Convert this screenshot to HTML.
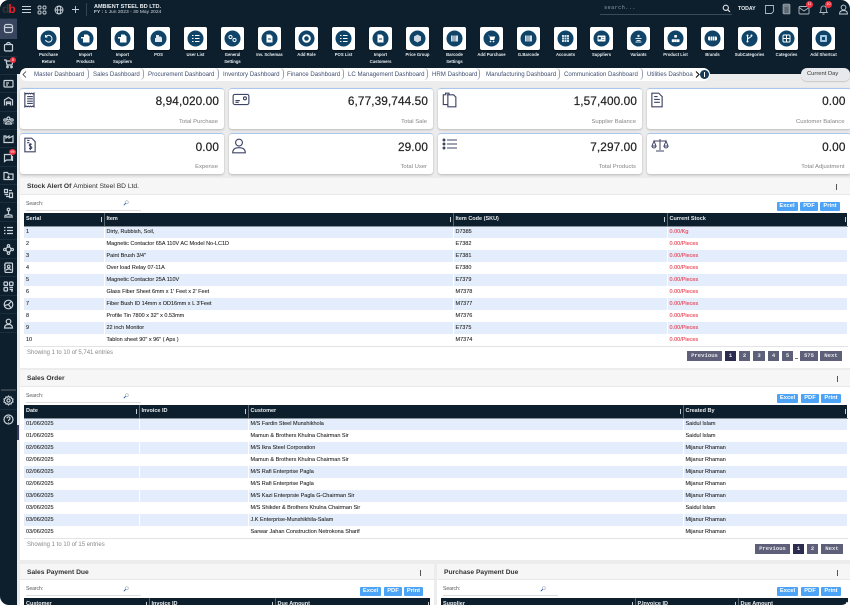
<!DOCTYPE html>
<html><head><meta charset="utf-8"><title>Dashboard</title>
<style>
*{box-sizing:border-box}
html,body{margin:0;padding:0;background:#fff}
body{width:850px;height:605px;overflow:hidden;position:relative;font-family:"Liberation Sans",sans-serif;color:#222}
#app{position:absolute;inset:0;background:#ececec;border-radius:9px;overflow:hidden}
.abs,.tile,.lb,.card,.panel,.btn,.pg,.si,.sl,.ph{position:absolute}
#top{position:absolute;left:0;top:0;width:850px;height:74px;background:#0d1f2d}
#side{position:absolute;left:0;top:0;width:17px;height:605px;background:#0d1f2d}
.sl{left:0;width:17px;height:1px;background:#1a2e3d}
.si{left:3px;width:11px;height:11px;fill:none;stroke:#c9d2da;stroke-width:1.2}
.tile{top:27px;width:23px;height:22.5px;background:#fff;border-radius:2px;box-shadow:0 1px 1px rgba(0,0,0,.5)}
.tile svg{position:absolute;left:3px;top:3px;width:17px;height:17px}
.lb{width:37px;text-align:center;color:#e7ecf0;font-size:4.2px;font-weight:bold;line-height:6.8px;top:52px}
#crumb{position:absolute;left:20px;top:68px;width:690px;height:12.5px;background:#fff;border-radius:7px}
#crumb span{position:absolute;top:3px;font-size:6.1px;color:#3f4f70;white-space:nowrap}
#crumb i{position:absolute;top:0;width:4px;height:12px;border-right:.7px solid #9aa3b5;border-radius:0 6px 6px 0}
.card{background:#fff;border-top:1px solid #a9c6ef;border-radius:3px;box-shadow:0 1px 2px rgba(0,0,0,.22)}
.card b{position:absolute;right:5px;top:5px;font-weight:normal;font-size:11.8px;color:#222;letter-spacing:.1px;-webkit-text-stroke:.2px #222}
.card em{position:absolute;right:6px;top:29.5px;font-style:normal;font-size:5.9px;color:#858585}
.c2 b{top:6px}.c2 em{top:30.5px}
.card svg{position:absolute;left:2px;top:2.5px;width:16px;height:16px;fill:none;stroke:#3f4465;stroke-width:1}
.panel{background:#fff}
.ph{left:0;top:0;right:0;height:17px;background:#f6f6f6;border-bottom:1px solid #e8e8e8;font-size:6.7px;font-weight:bold;color:#333;line-height:18px;padding-left:7px}
.ph span{font-weight:normal;color:#333}
.dots{position:absolute;top:6px;width:1.2px;height:5.5px;background:#555}
.srch{position:absolute;font-size:5px;color:#555}
.sline{position:absolute;height:1px;background:#dedede;width:115px}
.mag{position:absolute;width:6px;height:6px}
.btn{height:9px;background:#4da3f5;color:#fff;font-size:5.8px;font-weight:bold;text-align:center;line-height:9px;border-radius:1px}
table{position:absolute;border-collapse:collapse;table-layout:fixed;font-size:5.5px;color:#222}
th{background:#0d1f2d;color:#e8ecef;height:13px;font-size:5.5px;font-weight:bold;text-align:left;padding:0 0 0 2px;border-right:1px solid #58636c;border-bottom:1px solid #8a9299;position:relative;white-space:nowrap}
th:last-child{border-right:0}
th::after{content:"";position:absolute;right:1.5px;top:4px;width:1px;height:4.5px;background:#c9d0d5}
td{height:12px;padding:0 0 0 2px;white-space:nowrap;overflow:hidden;border-right:1px solid transparent;-webkit-text-stroke:.08px currentColor}
tr:nth-child(odd) td{background:#e3edfb}
tbody tr:nth-child(odd) td{border-right:1px solid #fff}
tbody tr:last-child td{border-bottom:1px solid #e3e3e3}
.r{color:#e8394a}
.show{position:absolute;font-size:6px;color:#8a8a8a}
.pg{height:10px;background:#5d6078;color:#e5e6ec;font-family:"Liberation Mono",monospace;font-size:5.6px;font-weight:bold;text-align:center;line-height:10px}
.pg.on{background:#2b2c4f}
</style></head><body>
<div id="app">
<div id="top"></div>
<!-- topbar -->
<svg class="abs" style="left:21px;top:5px;width:11px;height:9px" viewBox="0 0 11 9" fill="none" stroke="#c9d2da" stroke-width="1"><path d="M1 1.5h9M1 4.5h9M1 7.5h9"/></svg>
<svg class="abs" style="left:37px;top:5px;width:10px;height:10px" viewBox="0 0 10 10" fill="none" stroke="#c9d2da" stroke-width=".9"><rect x="1" y="1" width="3" height="3" rx="1"/><rect x="6" y="1" width="3" height="3" rx="1"/><rect x="1" y="6" width="3" height="3" rx="1"/><rect x="6" y="6" width="3" height="3" rx="1"/></svg>
<svg class="abs" style="left:54px;top:5px;width:10px;height:10px" viewBox="0 0 10 10" fill="none" stroke="#c9d2da" stroke-width=".9"><circle cx="5" cy="5" r="4"/><ellipse cx="5" cy="5" rx="1.8" ry="4"/><path d="M1 5h8"/></svg>
<svg class="abs" style="left:71px;top:5px;width:9px;height:9px" viewBox="0 0 9 9" fill="none" stroke="#c9d2da" stroke-width=".9"><path d="M4.5 1v7M1 4.5h7"/></svg>
<div class="abs" style="left:86px;top:3px;width:1px;height:13px;background:#33434f"></div>
<div class="abs" style="left:94px;top:3.500px;color:#e8ecef;font-size:5.500px;font-weight:bold;white-space:nowrap">AMBIENT STEEL BD LTD.</div>
<div class="abs" style="left:94px;top:10px;color:#c9d2da;font-size:4.900px;white-space:nowrap"><b>FY :</b> 1 Jun 2023 - 30 May 2024</div>
<div class="abs" style="left:604px;top:5px;color:#8b98a3;font-size:5.400px;letter-spacing:.3px;font-family:'Liberation Mono',monospace">search...</div>
<div class="abs" style="left:600px;top:14px;width:132px;height:1px;background:#3a4a57"></div>
<svg class="abs" style="left:722px;top:4px;width:9px;height:9px" viewBox="0 0 9 9" fill="none" stroke="#dfe4e8" stroke-width="1.1"><circle cx="3.8" cy="3.8" r="2.6"/><path d="M5.8 5.8L8 8"/></svg>
<div class="abs" style="left:738px;top:6px;color:#e8ecef;font-size:5.200px;font-weight:bold">TODAY</div>
<svg class="abs" style="left:764px;top:4px;width:11px;height:11px" viewBox="0 0 11 11" fill="none" stroke="#aeb8c0" stroke-width=".9"><path d="M1.5 1.5h8v6l-2 2h-6z"/></svg>
<svg class="abs" style="left:782px;top:3px;width:9px;height:12px" viewBox="0 0 9 12" fill="#77828c" stroke="#aeb8c0" stroke-width=".6"><rect x="1" y="1" width="7" height="10" rx="1"/><path d="M2.5 5h4M2.5 7h4M2.5 9h4" stroke="#0d1f2d"/></svg>
<svg class="abs" style="left:798px;top:5px;width:13px;height:10px" viewBox="0 0 13 10" fill="none" stroke="#aeb8c0" stroke-width=".9"><rect x="1" y="1.5" width="10" height="7.5" rx="1"/><path d="M1 2.5l5 3.500 5-3.500"/></svg>
<div class="abs" style="left:806px;top:1px;width:7px;height:7px;border-radius:50%;background:#f0333f;color:#fff;font-size:3.600px;text-align:center;line-height:7px">11</div>
<svg class="abs" style="left:818px;top:4px;width:11px;height:11px" viewBox="0 0 11 11" fill="none" stroke="#aeb8c0" stroke-width=".9"><path d="M2 8.500c1-1 1-2 1-4a2.600 2.600 0 0 1 5.200 0c0 2 0 3 1 4zM4.500 10h2"/></svg>
<div class="abs" style="left:825px;top:1px;width:7px;height:7px;border-radius:50%;background:#f0333f;color:#fff;font-size:3.600px;text-align:center;line-height:7px">10</div>
<svg class="abs" style="left:838px;top:4px;width:11px;height:11px" viewBox="0 0 11 11" fill="none" stroke="#c9d2da" stroke-width=".9"><circle cx="5.500" cy="3.500" r="2.400"/><path d="M1.500 10c0-2.500 1.500-3.500 4-3.500s4 1 4 3.500z"/></svg>

<!-- tiles -->
<div class="tile" style="left:37px"><svg viewBox="0 0 17 17"><circle cx="8.5" cy="8.5" r="8" fill="#0f4468"/><path d="M6 6.500a3.400 3.400 0 1 1-.5 3.500M5.500 5v2h2" fill="none" stroke="#fff" stroke-width="1"/></svg></div>
<div class="tile" style="left:74px"><svg viewBox="0 0 17 17"><circle cx="8.5" cy="8.5" r="8" fill="#0f4468"/><path d="M7 4.500h3.500l2 2v6H6v-4h-2v-1.500h3z" fill="#fff"/></svg></div>
<div class="tile" style="left:111px"><svg viewBox="0 0 17 17"><circle cx="8.5" cy="8.5" r="8" fill="#0f4468"/><path d="M7 4.500h3.500l2 2v6H6v-4h-2v-1.500h3z" fill="#fff"/></svg></div>
<div class="tile" style="left:147px"><svg viewBox="0 0 17 17"><circle cx="8.5" cy="8.5" r="8" fill="#0f4468"/><path d="M5 12V8h1V5h3v1.500h2L12 8v4z" fill="#dfe6ec"/></svg></div>
<div class="tile" style="left:184px"><svg viewBox="0 0 17 17"><circle cx="8.5" cy="8.5" r="8" fill="#0f4468"/><path d="M5 5.500h1.500M5 8.500h1.500M5 11.500h1.500M8 5.500h4.500M8 8.500h4.500M8 11.500h4.500" stroke="#fff" stroke-width="1.100"/></svg></div>
<div class="tile" style="left:221px"><svg viewBox="0 0 17 17"><circle cx="8.5" cy="8.5" r="8" fill="#0f4468"/><circle cx="6.500" cy="7" r="1.600" fill="none" stroke="#fff"/><circle cx="10.500" cy="10" r="1.600" fill="none" stroke="#fff"/></svg></div>
<div class="tile" style="left:258px"><svg viewBox="0 0 17 17"><circle cx="8.5" cy="8.5" r="8" fill="#0f4468"/><path d="M5.500 4.500h4l2 2v6h-6z" fill="#fff"/><path d="M7 9h3" stroke="#0f4468"/></svg></div>
<div class="tile" style="left:295px"><svg viewBox="0 0 17 17"><circle cx="8.5" cy="8.5" r="8" fill="#0f4468"/><circle cx="8.500" cy="8.500" r="3.300" fill="none" stroke="#fff" stroke-width="2"/></svg></div>
<div class="tile" style="left:332px"><svg viewBox="0 0 17 17"><circle cx="8.5" cy="8.5" r="8" fill="#0f4468"/><path d="M5 5.500h1.500M5 8.500h1.500M5 11.500h1.500M8 5.500h4.500M8 8.500h4.500M8 11.500h4.500" stroke="#fff"/></svg></div>
<div class="tile" style="left:369px"><svg viewBox="0 0 17 17"><circle cx="8.5" cy="8.5" r="8" fill="#0f4468"/><path d="M5.500 4.500h4l2 2v6h-6z" fill="#fff"/><path d="M7 9h3" stroke="#0f4468"/></svg></div>
<div class="tile" style="left:406px"><svg viewBox="0 0 17 17"><circle cx="8.5" cy="8.5" r="8" fill="#0f4468"/><path d="M8.500 4.500l3.500 2v4l-3.500 2-3.500-2v-4z" fill="#cdd8e0"/></svg></div>
<div class="tile" style="left:443px"><svg viewBox="0 0 17 17"><circle cx="8.5" cy="8.5" r="8" fill="#0f4468"/><rect x="5" y="5.500" width="7" height="6" fill="#d6dfe6"/><path d="M7 5.500v6M9 5.500v6" stroke="#0f4468" stroke-width=".6"/></svg></div>
<div class="tile" style="left:480px"><svg viewBox="0 0 17 17"><circle cx="8.5" cy="8.5" r="8" fill="#0f4468"/><path d="M5 5.500h1.200l1 4.500h4l1-3.500h-5.500" fill="#fff"/><circle cx="7.500" cy="11.500" r=".9" fill="#fff"/><circle cx="10.500" cy="11.500" r=".9" fill="#fff"/></svg></div>
<div class="tile" style="left:517px"><svg viewBox="0 0 17 17"><circle cx="8.5" cy="8.5" r="8" fill="#0f4468"/><rect x="5" y="5.500" width="7" height="6" fill="#d6dfe6"/><path d="M7 5.500v6M9 5.500v6" stroke="#0f4468" stroke-width=".6"/></svg></div>
<div class="tile" style="left:554px"><svg viewBox="0 0 17 17"><circle cx="8.5" cy="8.5" r="8" fill="#0f4468"/><rect x="5" y="5" width="7" height="7" fill="#d6dfe6"/><path d="M5 7.300h7M5 9.700h7M7.300 5v7M9.700 5v7" stroke="#0f4468" stroke-width=".5"/></svg></div>
<div class="tile" style="left:590px"><svg viewBox="0 0 17 17"><circle cx="8.5" cy="8.5" r="8" fill="#0f4468"/><rect x="4.500" y="5.500" width="8" height="6" rx=".8" fill="#fff"/><rect x="5.500" y="7" width="2.300" height="2.500" fill="#0f4468"/><path d="M8.800 7.500h2.500M8.800 9.500h2.500" stroke="#0f4468" stroke-width=".6"/></svg></div>
<div class="tile" style="left:627px"><svg viewBox="0 0 17 17"><circle cx="8.5" cy="8.5" r="8" fill="#0f4468"/><circle cx="8.500" cy="6" r="1.200" fill="#dfe6ec"/><path d="M5.500 8.500h6M6.500 10.500h4M5.500 12h6" stroke="#dfe6ec"/></svg></div>
<div class="tile" style="left:664px"><svg viewBox="0 0 17 17"><circle cx="8.5" cy="8.5" r="8" fill="#0f4468"/><rect x="7.300" y="5" width="2.600" height="2.600" fill="#fff"/><rect x="4.800" y="9.300" width="2.500" height="2.800" fill="#fff"/><rect x="7.300" y="9.300" width="2.500" height="2.800" fill="#fff"/><rect x="10" y="9.300" width="2.500" height="2.800" fill="#fff"/></svg></div>
<div class="tile" style="left:701px"><svg viewBox="0 0 17 17"><circle cx="8.5" cy="8.5" r="8" fill="#0f4468"/><rect x="4" y="6.500" width="9" height="4" rx="1.200" fill="#fff"/><path d="M6.500 6.500v4M8.500 6.500v4M10.500 6.500v4" stroke="#0f4468" stroke-width=".5"/></svg></div>
<div class="tile" style="left:738px"><svg viewBox="0 0 17 17"><circle cx="8.5" cy="8.5" r="8" fill="#0f4468"/><circle cx="6.500" cy="5.500" r="1" fill="#fff"/><circle cx="6.500" cy="11.500" r="1" fill="#fff"/><circle cx="10.500" cy="5.500" r="1" fill="#fff"/><path d="M6.500 5.500v6M10.500 5.500c0 2.500-4 2-4 4" fill="none" stroke="#fff"/></svg></div>
<div class="tile" style="left:775px"><svg viewBox="0 0 17 17"><circle cx="8.5" cy="8.5" r="8" fill="#0f4468"/><rect x="5" y="5" width="7" height="7" rx="1" fill="none" stroke="#fff"/><path d="M5 8.500h7M8.500 5v7" stroke="#fff"/></svg></div>
<div class="tile" style="left:812px"><svg viewBox="0 0 17 17"><circle cx="8.5" cy="8.5" r="8" fill="#0f4468"/><rect x="5" y="5" width="7" height="7" rx="1" fill="#a5c8e4"/><rect x="7" y="7" width="3" height="3" fill="#0f4468"/></svg></div>

<div class="lb" style="left:30px">Purchase<br>Return</div>
<div class="lb" style="left:67px">Import<br>Products</div>
<div class="lb" style="left:104px">Import<br>Suppliers</div>
<div class="lb" style="left:140px">POS</div>
<div class="lb" style="left:177px">User List</div>
<div class="lb" style="left:214px">General<br>Settings</div>
<div class="lb" style="left:251px">Inv. Schemas</div>
<div class="lb" style="left:288px">Add Role</div>
<div class="lb" style="left:325px">POS List</div>
<div class="lb" style="left:362px">Import<br>Customers</div>
<div class="lb" style="left:399px">Price Group</div>
<div class="lb" style="left:436px">Barcode<br>Settings</div>
<div class="lb" style="left:473px">Add Purchase</div>
<div class="lb" style="left:510px">G.Barcode</div>
<div class="lb" style="left:547px">Accounts</div>
<div class="lb" style="left:583px">Suppliers</div>
<div class="lb" style="left:620px">Variants</div>
<div class="lb" style="left:657px">Product List</div>
<div class="lb" style="left:694px">Brands</div>
<div class="lb" style="left:731px">SubCategories</div>
<div class="lb" style="left:768px">Categories</div>
<div class="lb" style="left:805px">Add Shortcut</div>

<!-- breadcrumb -->
<div id="crumb">
<svg class="abs" style="left:2px;top:3px;width:5px;height:7px" viewBox="0 0 5 7" fill="none" stroke="#333" stroke-width=".8"><path d="M4 .5L1 3.500 4 6.500"/></svg>
<span style="left:14px">Master Dashboard</span><i style="left:65px"></i>
<span style="left:73px">Sales Dashboard</span><i style="left:120px"></i>
<span style="left:128px">Procurement Dashboard</span><i style="left:195px"></i>
<span style="left:203px">Inventory Dashboard</span><i style="left:260px"></i>
<span style="left:267px">Finance Dashboard</span><i style="left:320px"></i>
<span style="left:328px">LC Management Dashboard</span><i style="left:404px"></i>
<span style="left:412px">HRM Dashboard</span><i style="left:456px"></i>
<span style="left:466px">Manufacturing Dashboard</span><i style="left:536px"></i>
<span style="left:544px">Communication Dashboard</span><i style="left:619px"></i>
<span style="left:627px">Utilities Dashboa</span>
<svg class="abs" style="left:675px;top:3px;width:5px;height:7px" viewBox="0 0 5 7" fill="none" stroke="#111" stroke-width="1.100"><path d="M1 .5L4 3.500 1 6.500"/></svg>
<div class="abs" style="left:680px;top:2px;width:9px;height:9px;border-radius:50%;background:#163a57"></div>
<div class="abs" style="left:684px;top:4px;width:1.200px;height:5px;background:#fff"></div>
</div>
<div class="abs" style="left:801px;top:68px;width:49px;height:13px;background:#e8e9ec;border-radius:6px;font-size:5.800px;color:#333;line-height:13px;padding-left:6px;box-shadow:0 1px 1px rgba(0,0,0,.15)">Current Day</div>

<!-- cards -->
<div class="card" style="left:20px;top:88px;width:204px;height:40.500px"><svg viewBox="0 0 14 14"><path d="M2.500 1l1 .7 1-.7 1 .7 1-.7 1 .7 1-.7 1 .7 1-.7v12l-1-.7-1 .7-1-.7-1 .7-1-.7-1 .7-1-.7-1 .7zM4.500 4h5M4.500 6h5M4.500 8h5M4.500 10h5"/></svg><b>8,94,020.00</b><em>Total Purchase</em></div>
<div class="card" style="left:229px;top:88px;width:204px;height:40.500px"><svg style="left:3px;width:18px" viewBox="0 0 16 14"><rect x="1" y="2" width="14" height="9" rx="1.500"/><path d="M3 7.500h4M3 9h3"/><circle cx="11.500" cy="5.500" r="1.300"/></svg><b>6,77,39,744.50</b><em>Total Sale</em></div>
<div class="card" style="left:437.500px;top:88px;width:204.500px;height:40.500px"><svg style="left:3px" viewBox="0 0 14 14"><path d="M5 2.500h6l2 2v8.500H6V2.500zM6 11H2V2.500h2M4 2.500V1h3v1.500"/></svg><b>1,57,400.00</b><em>Supplier Balance</em></div>
<div class="card" style="left:646.500px;top:88px;width:204px;height:40.500px"><svg viewBox="0 0 14 14"><path d="M2.500 1h6l3 3v9h-9zM4.500 4h3M4.500 6.500h5M4.500 9h5"/></svg><b>0.00</b><em>Customer Balance</em></div>
<div class="card c2" style="left:20px;top:132.500px;width:204px;height:41.500px"><svg style="top:3.500px" viewBox="0 0 14 14"><path d="M2.500 1h6l3 3v9h-9zM4.500 3h2M4.500 5h2"/><path d="M8.500 6.500c-2-1-3 1-1 1.700s1 2.800-1.300 1.700M7.300 5.500v6"/></svg><b>0.00</b><em>Expense</em></div>
<div class="card c2" style="left:229px;top:132.500px;width:204px;height:41.500px"><svg style="left:2.300px;top:4px" viewBox="0 0 14 14"><circle cx="7" cy="4" r="3"/><path d="M1.500 13c0-3 2-4.500 5.500-4.500s5.500 1.500 5.500 4.500z"/></svg><b>29.00</b><em>Total User</em></div>
<div class="card c2" style="left:437.500px;top:132.500px;width:204.500px;height:41.500px"><svg style="left:4px;top:3px;width:16px;height:14px" viewBox="0 0 16 14"><circle cx="2" cy="3" r="1" fill="#3f4465"/><circle cx="2" cy="7" r="1" fill="#3f4465"/><circle cx="2" cy="11" r="1" fill="#3f4465"/><path d="M5 3h10M5 7h10M5 11h10"/></svg><b>7,297.00</b><em>Total Products</em></div>
<div class="card c2" style="left:646.500px;top:132.500px;width:204px;height:41.500px"><svg style="left:4px;top:4px;width:18px;height:14px" viewBox="0 0 18 14"><path d="M9 1v11M5 13h8M3 3h12M3 3L1 8h4zM15 3l-2 5h4zM1 8a2 2 0 0 0 4 0M13 8a2 2 0 0 0 4 0"/></svg><b>0.00</b><em>Total Adjustment</em></div>

<!-- stock panel -->
<div class="panel" style="left:20px;top:178px;width:830px;height:190px">
<div class="ph">Stock Alert Of <span>Ambient Steel BD Ltd.</span><div class="dots" style="left:816px"></div></div>
</div>
<div class="srch" style="left:26px;top:201px">Search:</div><div class="sline" style="left:26px;top:210px"></div>
<svg class="mag" style="left:123px;top:200px" viewBox="0 0 6 6"><circle cx="3.800" cy="2.200" r="1.500" fill="none" stroke="#a8b4c8" stroke-width=".7"/><path d="M2.700 3.300L.8 5.200" stroke="#1f5fbf" stroke-width="1"/></svg>
<div class="btn" style="left:776.500px;top:202px;width:21px">Excel</div><div class="btn" style="left:800px;top:202px;width:18px">PDF</div><div class="btn" style="left:820px;top:202px;width:20px">Print</div>
<table style="left:24px;top:213px;width:823px">
<colgroup><col style="width:80px"><col style="width:349px"><col style="width:214px"><col style="width:180px"></colgroup>
<thead><tr><th>Serial</th><th>Item</th><th>Item Code (SKU)</th><th>Current Stock</th></tr></thead>
<tbody>
<tr><td>1</td><td>Dirty, Rubbish, Soil,</td><td>D7385</td><td class="r">0.00/Kg</td></tr>
<tr><td>2</td><td>Magnetic Contactor 65A 110V AC Model No-LC1D</td><td>E7382</td><td class="r">0.00/Pieces</td></tr>
<tr><td>3</td><td>Paint Brush 3/4"</td><td>E7381</td><td class="r">0.00/Pieces</td></tr>
<tr><td>4</td><td>Over load Relay 07-11A</td><td>E7380</td><td class="r">0.00/Pieces</td></tr>
<tr><td>5</td><td>Magnetic Contactor 25A 110V</td><td>E7379</td><td class="r">0.00/Pieces</td></tr>
<tr><td>6</td><td>Glass Fiber Sheet 6mm x 1' Feet x 2' Feet</td><td>M7378</td><td class="r">0.00/Pieces</td></tr>
<tr><td>7</td><td>Fiber Bush ID 14mm x OD16mm x L 3'Feet</td><td>M7377</td><td class="r">0.00/Pieces</td></tr>
<tr><td>8</td><td>Profile Tin 7800 x 32" x 0.53mm</td><td>M7376</td><td class="r">0.00/Pieces</td></tr>
<tr><td>9</td><td>22 inch Monitor</td><td>E7375</td><td class="r">0.00/Pieces</td></tr>
<tr><td>10</td><td>Tablon sheet 90" x 96" ( Aps )</td><td>M7374</td><td class="r">0.00/Pieces</td></tr>
</tbody></table>
<div class="show" style="left:27px;top:350px">Showing 1 to 10 of 5,741 entries</div>
<div class="pg" style="left:687px;top:351px;width:35px">Previous</div><div class="pg on" style="left:725px;top:351px;width:11px">1</div><div class="pg" style="left:739px;top:351px;width:11px">2</div><div class="pg" style="left:753px;top:351px;width:12px">3</div><div class="pg" style="left:768px;top:351px;width:11px">4</div><div class="pg" style="left:782px;top:351px;width:11px">5</div><div class="abs" style="left:795px;top:358px;width:3px;height:1px;background:#777"></div><div class="pg" style="left:800px;top:351px;width:18px">575</div><div class="pg" style="left:820px;top:351px;width:22px">Next</div>

<!-- sales order -->
<div class="panel" style="left:20px;top:370px;width:830px;height:190px">
<div class="ph">Sales Order<div class="dots" style="left:817px"></div></div>
</div>
<div class="srch" style="left:26px;top:393px">Search:</div><div class="sline" style="left:26px;top:402px"></div>
<svg class="mag" style="left:123px;top:393px" viewBox="0 0 6 6"><circle cx="3.800" cy="2.200" r="1.500" fill="none" stroke="#a8b4c8" stroke-width=".7"/><path d="M2.700 3.300L.8 5.200" stroke="#1f5fbf" stroke-width="1"/></svg>
<div class="btn" style="left:777px;top:394px;width:21px">Excel</div><div class="btn" style="left:801px;top:394px;width:18px">PDF</div><div class="btn" style="left:821px;top:394px;width:20px">Print</div>
<table style="left:24px;top:405px;width:823px">
<colgroup><col style="width:115px"><col style="width:109px"><col style="width:435px"><col style="width:164px"></colgroup>
<thead><tr><th>Date</th><th>Invoice ID</th><th>Customer</th><th>Created By</th></tr></thead>
<tbody>
<tr><td>01/06/2025</td><td></td><td>M/S Fardin Steel Munshikhola</td><td>Saidul Islam</td></tr>
<tr><td>01/06/2025</td><td></td><td>Mamun &amp; Brothers Khulna Chairman Sir</td><td>Saidul Islam</td></tr>
<tr><td>02/06/2025</td><td></td><td>M/S Ikra Steel Corporation</td><td>Mijanur Rhaman</td></tr>
<tr><td>02/06/2025</td><td></td><td>Mamun &amp; Brothers Khulna Chairman Sir</td><td>Mijanur Rhaman</td></tr>
<tr><td>02/06/2025</td><td></td><td>M/S Rafi Enterprise Pagla</td><td>Mijanur Rhaman</td></tr>
<tr><td>02/06/2025</td><td></td><td>M/S Rafi Enterprise Pagla</td><td>Mijanur Rhaman</td></tr>
<tr><td>03/06/2025</td><td></td><td>M/S Kazi Enterprsie Pagla G-Chairman Sir</td><td>Mijanur Rhaman</td></tr>
<tr><td>03/06/2025</td><td></td><td>M/S Shikder &amp; Brothers Khulna Chairman Sir</td><td>Saidul Islam</td></tr>
<tr><td>03/06/2025</td><td></td><td>J.K Enterprise-Munshikhila-Salam</td><td>Mijanur Rhaman</td></tr>
<tr><td>03/06/2025</td><td></td><td>Sarwar Jahan Construction Netrokona Sharif</td><td>Mijanur Rhaman</td></tr>
</tbody></table>
<div class="show" style="left:27px;top:542px">Showing 1 to 10 of 15 entries</div>
<div class="pg" style="left:755px;top:544px;width:35px">Previous</div><div class="pg on" style="left:793px;top:544px;width:11px">1</div><div class="pg" style="left:807px;top:544px;width:11px">2</div><div class="pg" style="left:821px;top:544px;width:22px">Next</div>

<!-- bottom panels -->
<div class="panel" style="left:20px;top:564px;width:414px;height:41px">
<div class="ph" style="height:16px;line-height:17px">Sales Payment Due<div class="dots" style="left:400px"></div></div>
</div>
<div class="panel" style="left:437px;top:564px;width:413px;height:41px">
<div class="ph" style="height:16px;line-height:17px">Purchase Payment Due<div class="dots" style="left:400px"></div></div>
</div>
<div class="srch" style="left:26px;top:586px">Search:</div><div class="sline" style="left:26px;top:595px"></div>
<svg class="mag" style="left:123px;top:586px" viewBox="0 0 6 6"><circle cx="3.800" cy="2.200" r="1.500" fill="none" stroke="#a8b4c8" stroke-width=".7"/><path d="M2.700 3.300L.8 5.200" stroke="#1f5fbf" stroke-width="1"/></svg>
<div class="btn" style="left:360px;top:587px;width:21px">Excel</div><div class="btn" style="left:384px;top:587px;width:18px">PDF</div><div class="btn" style="left:404px;top:587px;width:19px">Print</div>
<div class="srch" style="left:443px;top:586px">Search:</div><div class="sline" style="left:443px;top:595px"></div>
<svg class="mag" style="left:540px;top:586px" viewBox="0 0 6 6"><circle cx="3.800" cy="2.200" r="1.500" fill="none" stroke="#a8b4c8" stroke-width=".7"/><path d="M2.700 3.300L.8 5.200" stroke="#1f5fbf" stroke-width="1"/></svg>
<div class="btn" style="left:777px;top:587px;width:21px">Excel</div><div class="btn" style="left:801px;top:587px;width:18px">PDF</div><div class="btn" style="left:821px;top:587px;width:20px">Print</div>
<table style="left:24px;top:598px;width:406px">
<colgroup><col style="width:125px"><col style="width:126px"><col style="width:155px"></colgroup>
<thead><tr><th>Customer</th><th>Invoice ID</th><th>Due Amount</th></tr></thead></table>
<table style="left:441px;top:598px;width:407px">
<colgroup><col style="width:194px"><col style="width:103px"><col style="width:110px"></colgroup>
<thead><tr><th>Supplier</th><th>P.Invoice ID</th><th>Due Amount</th></tr></thead></table>

<!-- sidebar -->
<div id="side"></div>
<div class="abs" style="left:17px;top:425px;width:2px;height:15px;background:#3a3a5e"></div>
<div class="abs" style="left:0;top:19px;width:17px;height:20px;background:#39445e"></div>
<div class="abs" style="left:2px;top:3px;font-size:12px;font-weight:bold;line-height:12px;letter-spacing:-1px;color:#333">d<span style="color:#e8202c">b</span></div>
<div class="sl" style="top:18px"></div><div class="sl" style="top:56px"></div><div class="sl" style="top:74px"></div><div class="sl" style="top:92px"></div><div class="sl" style="top:111px"></div><div class="sl" style="top:129px"></div><div class="sl" style="top:147px"></div><div class="sl" style="top:166px"></div><div class="sl" style="top:184px"></div><div class="sl" style="top:202px"></div><div class="sl" style="top:221px"></div><div class="sl" style="top:239px"></div><div class="sl" style="top:258px"></div><div class="sl" style="top:276px"></div><div class="sl" style="top:295px"></div><div class="sl" style="top:313px"></div><div class="sl" style="top:332px"></div><div class="sl" style="top:409px"></div>
<div class="abs" style="left:1px;top:389px;width:15px;height:1.500px;background:#36434e"></div>
<svg class="si" style="top:23px" viewBox="0 0 11 11"><rect x="1.500" y="1.500" width="8" height="8" rx="2"/><path d="M1.500 4.500h8"/></svg>
<svg class="si" style="top:41px" viewBox="0 0 11 11"><rect x="1.500" y="3.500" width="8" height="6.500" rx="1"/><path d="M3.500 3.500a2 2 0 0 1 4 0"/></svg>
<svg class="si" style="top:58px" viewBox="0 0 11 11"><path d="M1 2h2l1 5h5l1-4H3.500"/><circle cx="4.500" cy="9" r=".8"/><circle cx="8.500" cy="9" r=".8"/></svg>
<svg class="si" style="top:78px" viewBox="0 0 11 11"><rect x="1" y="2.500" width="9" height="6.500" rx=".8"/><path d="M3 5h3M3 7h2"/></svg>
<svg class="si" style="top:96px" viewBox="0 0 11 11"><path d="M1.500 9.500V4l4-2.500 4 2.500v5.500M3.500 9.500V6h4v3.500M3.500 7.500h4"/></svg>
<svg class="si" style="top:115px" viewBox="0 0 11 11"><circle cx="5.500" cy="3.500" r="1.500"/><circle cx="2" cy="5" r="1.200"/><circle cx="9" cy="5" r="1.200"/><path d="M2.500 9c0-3 6-3 6 0zM.5 8h1M9.500 8h1"/></svg>
<svg class="si" style="top:133px" viewBox="0 0 11 11"><path d="M1 9.500V3h2v2l3-2v2l4-2v6.500z"/></svg>
<svg class="si" style="top:152px" viewBox="0 0 11 11"><path d="M1.500 2.500h7v5.500h-5l-2 1.500z"/><path d="M9.500 4v5"/></svg>
<svg class="si" style="top:170px" viewBox="0 0 11 11"><path d="M1 2.500h3.500l1 1.500h4.500v5.500H1zM5.500 5.500v2.500M4.300 7l1.200 1 1.200-1"/></svg>
<svg class="si" style="top:188px" viewBox="0 0 11 11"><path d="M1.500 1.500h3v3h-3zM6.500 5h3v4.500h-3zM1.500 6.500h3.500M3 8.500h3M6 2.500h3"/></svg>
<svg class="si" style="top:207px" viewBox="0 0 11 11"><circle cx="5.500" cy="2.500" r="1.300"/><path d="M5.500 4v3M1.500 8.500l4-1 4 1M1 10h9"/></svg>
<svg class="si" style="top:225px" viewBox="0 0 11 11"><path d="M1 2.500h1.500M1 5.500h1.500M1 8.500h1.500M4 2.500h6M4 5.500h6M4 8.500h6"/></svg>
<svg class="si" style="top:244px" viewBox="0 0 11 11"><circle cx="5.500" cy="5.500" r="2.500"/><circle cx="5.500" cy="1.800" r="1.200"/><circle cx="5.500" cy="9.200" r="1.200"/><circle cx="1.800" cy="5.500" r="1.200"/><circle cx="9.200" cy="5.500" r="1.200"/></svg>
<svg class="si" style="top:262px" viewBox="0 0 11 11"><rect x="2" y="1" width="7.500" height="9.500" rx="1"/><circle cx="5.700" cy="4.500" r="1.300"/><path d="M3.500 8.500c0-2 4.500-2 4.500 0M1 3h1.500M1 6h1.500"/></svg>
<svg class="si" style="top:281px" viewBox="0 0 11 11"><rect x="1" y="1" width="3.500" height="3.500" rx=".8"/><rect x="6.500" y="1" width="3.500" height="3.500" rx=".8"/><rect x="1" y="6.500" width="3.500" height="3.500" rx=".8"/><path d="M6.500 6.500h3.500M6.500 8.500h3.500M8 10h2"/></svg>
<svg class="si" style="top:299px" viewBox="0 0 11 11"><circle cx="5.500" cy="5.500" r="4.300"/><path d="M1.500 6.500l4-1 3-3.500M5.500 5.500l2.500 3.500"/></svg>
<svg class="si" style="top:318px" viewBox="0 0 11 11"><circle cx="5.500" cy="3.500" r="2.300"/><path d="M1.500 10c0-2.500 1.500-3.500 4-3.500s4 1 4 3.500z"/></svg>
<svg class="si" style="top:395px" viewBox="0 0 11 11"><circle cx="5.500" cy="5.500" r="1.600"/><path d="M5.500 1l1 1.200 1.500-.3.500 1.500 1.500.7-.4 1.400.4 1.400-1.500.7-.5 1.500-1.500-.3-1 1.200-1-1.200-1.500.3-.5-1.500L1 7l.4-1.400L1 4.100l1.500-.7.500-1.500 1.500.3z"/></svg>
<svg class="si" style="top:414px" viewBox="0 0 11 11"><circle cx="5.500" cy="5.500" r="4.500"/><path d="M4 4.300a1.500 1.500 0 1 1 2.300 1.300c-.6.400-.8.700-.8 1.400M5.500 8v.6"/></svg>
<div class="abs" style="left:10px;top:57px;width:6px;height:6px;border-radius:50%;background:#f0333f;color:#fff;font-size:3.500px;text-align:center;line-height:6px">8</div>
<div class="abs" style="left:9px;top:149px;width:7px;height:6px;border-radius:50%;background:#f0333f;color:#fff;font-size:3.500px;text-align:center;line-height:6px">99</div>
</div>
</body></html>
